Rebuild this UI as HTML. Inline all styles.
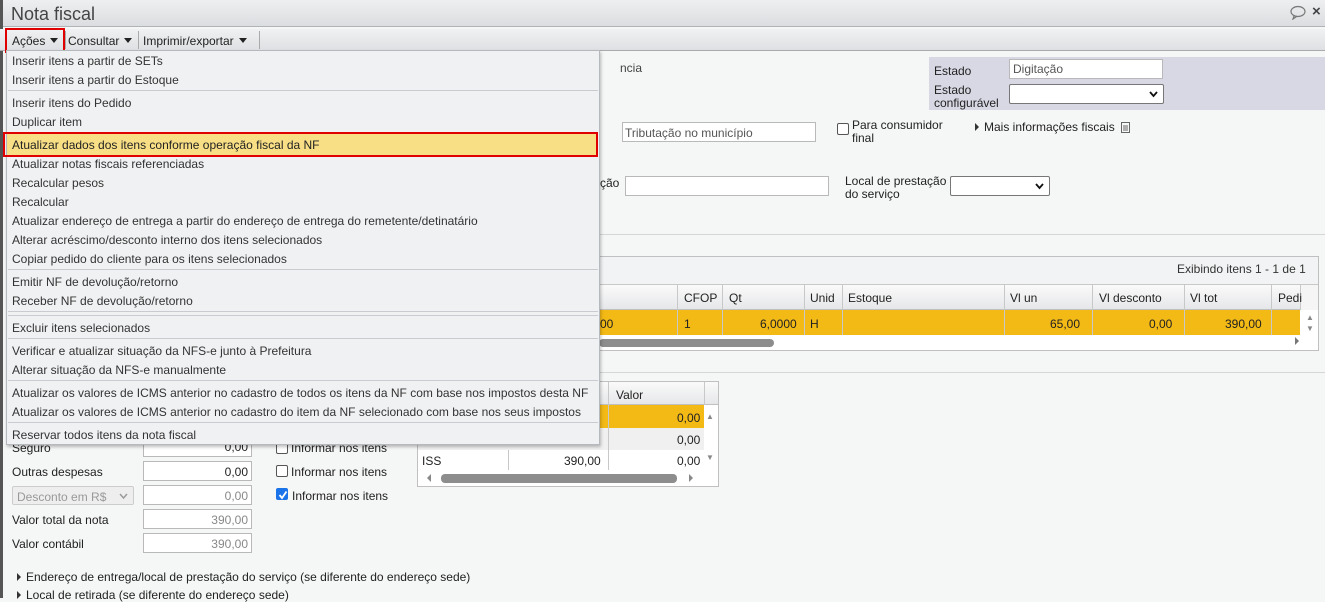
<!DOCTYPE html>
<html><head><meta charset="utf-8"><style>
*{box-sizing:border-box;margin:0;padding:0}
body{width:1325px;height:598px;overflow:hidden;background:#f5f6f6;font-family:"Liberation Sans",sans-serif;font-size:12px;color:#222;position:relative}
.a{position:absolute;white-space:nowrap}
.inp{position:absolute;background:#fff;border:1px solid #b9b9b9}
.mi{position:absolute;left:12px;font-size:12px;color:#333;white-space:nowrap}
.sep{position:absolute;left:8px;width:590px;height:1px;background:#c9cbd0}
.tri{display:inline-block;width:0;height:0;border-left:4px solid #333;border-top:4px solid transparent;border-bottom:4px solid transparent;margin-right:5px}
.dd{display:inline-block;width:0;height:0;border-top:5px solid #222;border-left:4px solid transparent;border-right:4px solid transparent;margin-left:5px;vertical-align:2px}
.vl{position:absolute;width:1px;background:#c8c8c8}
.cb{position:absolute;width:12px;height:12px;border:1px solid #555;border-radius:2px;background:#fff}
</style></head><body>
<div class="a" style="left:0;top:0;width:1325px;height:27px;background:linear-gradient(#eeeff0,#dcdde0);border-bottom:1px solid #b0b3b8"></div>
<div class="a" style="left:0;top:0;width:3px;height:598px;background:#555"></div>
<div class="a" style="left:11px;top:4px;font-size:18px;color:#444">Nota fiscal</div>
<svg class="a" style="left:1289px;top:5px" width="18" height="15"><ellipse cx="9" cy="6.5" rx="7" ry="5" fill="none" stroke="#777" stroke-width="1.2"/><path d="M5 11 L4 14 L8 11.2" fill="none" stroke="#777" stroke-width="1.2"/></svg>
<div class="a" style="left:1312px;top:3px;font-size:15px;font-weight:bold;color:#444">×</div>
<div class="a" style="left:0;top:29px;width:1325px;height:22px;background:linear-gradient(#f0f1f2,#dfe0e3);border-bottom:1px solid #aaa"></div>
<div class="a" style="left:5px;top:28px;width:60px;height:25px;border:2px solid #e00000"></div>
<div class="a" style="left:65px;top:31px;width:1px;height:18px;background:#aaa"></div>
<div class="a" style="left:138px;top:31px;width:1px;height:18px;background:#aaa"></div>
<div class="a" style="left:259px;top:31px;width:1px;height:18px;background:#aaa"></div>
<div class="a" style="left:12px;top:34px">Ações<span class="dd"></span></div>
<div class="a" style="left:68px;top:34px">Consultar<span class="dd"></span></div>
<div class="a" style="left:143px;top:34px">Imprimir/exportar<span class="dd"></span></div>

<!-- top right box -->
<div class="a" style="left:929px;top:57px;width:396px;height:53px;background:#d8d8e4"></div>
<div class="a" style="left:934px;top:64px">Estado</div>
<div class="inp" style="left:1009px;top:59px;width:154px;height:20px;padding:2px 3px;color:#555">Digitação</div>
<div class="a" style="left:934px;top:84px;line-height:13px">Estado<br>configurável</div>
<div class="inp" style="left:1009px;top:84px;width:155px;height:20px;border-color:#777;border-radius:2px"><svg style="position:absolute;right:5px;top:6px" width="9" height="7"><path d="M1 1 L4.5 5 L8 1" fill="none" stroke="#111" stroke-width="1.8"/></svg></div>
<div class="a" style="left:620px;top:61px;color:#444">ncia</div>

<div class="inp" style="left:622px;top:122px;width:194px;height:20px;padding:3px 2px;color:#555">Tributação no município</div>
<div class="cb" style="left:837px;top:123px"></div>
<div class="a" style="left:852px;top:119px;line-height:13px">Para consumidor<br>final</div>
<div class="a" style="left:975px;top:120px"><span class="tri"></span>Mais informações fiscais</div>
<svg class="a" style="left:1121px;top:122px" width="9" height="11"><rect x="0.5" y="0.5" width="8" height="10" fill="none" stroke="#666"/><path d="M2 4H7M2 6H7M2 8H7" stroke="#666"/></svg>

<div class="a" style="left:600px;top:176px">ção</div>
<div class="inp" style="left:625px;top:176px;width:204px;height:20px"></div>
<div class="a" style="left:845px;top:175px;line-height:13px">Local de prestação<br>do serviço</div>
<div class="inp" style="left:950px;top:176px;width:100px;height:20px;border-color:#777;border-radius:2px"><svg style="position:absolute;right:5px;top:6px" width="9" height="7"><path d="M1 1 L4.5 5 L8 1" fill="none" stroke="#111" stroke-width="1.8"/></svg></div>
<div class="a" style="left:600px;top:234px;width:725px;height:1px;background:#d6d6d6"></div>

<!-- grid -->
<div class="a" style="left:598px;top:256px;width:721px;height:95px;border:1px solid #c0c0c0;background:#fff"></div>
<div class="a" style="left:599px;top:257px;width:719px;height:28px;background:#f2f3f4;border-bottom:1px solid #c8c8c8"></div>
<div class="a" style="left:1177px;top:262px;color:#333">Exibindo itens 1 - 1 de 1</div>
<div class="a" style="left:599px;top:285px;width:701px;height:25px;background:linear-gradient(#fafafa,#e6e7e9);border-bottom:1px solid #c0c0c0"></div>
<div class="a" style="left:1300px;top:285px;width:18px;height:25px;background:#f5f5f5"></div>
<div class="a" style="left:599px;top:310px;width:701px;height:25px;background:#f3b915"></div>
<div class="vl" style="left:677px;top:285px;height:50px"></div>
<div class="vl" style="left:722px;top:285px;height:50px"></div>
<div class="vl" style="left:804px;top:285px;height:50px"></div>
<div class="vl" style="left:842px;top:285px;height:50px"></div>
<div class="vl" style="left:1004px;top:285px;height:50px"></div>
<div class="vl" style="left:1092px;top:285px;height:50px"></div>
<div class="vl" style="left:1184px;top:285px;height:50px"></div>
<div class="vl" style="left:1271px;top:285px;height:50px"></div>
<div class="vl" style="left:1300px;top:285px;height:25px"></div>
<div class="a" style="left:684px;top:291px">CFOP</div>
<div class="a" style="left:729px;top:291px">Qt</div>
<div class="a" style="left:810px;top:291px">Unid</div>
<div class="a" style="left:848px;top:291px">Estoque</div>
<div class="a" style="left:1010px;top:291px">Vl un</div>
<div class="a" style="left:1099px;top:291px">Vl desconto</div>
<div class="a" style="left:1190px;top:291px">Vl tot</div>
<div class="a" style="left:1278px;top:291px">Pedi</div>
<div class="a" style="left:600px;top:317px">00</div>
<div class="a" style="left:684px;top:317px">1</div>
<div class="a" style="left:760px;top:317px">6,0000</div>
<div class="a" style="left:810px;top:317px">H</div>
<div class="a" style="left:1050px;top:317px">65,00</div>
<div class="a" style="left:1149px;top:317px">0,00</div>
<div class="a" style="left:1225px;top:317px">390,00</div>
<div class="a" style="left:1306px;top:312px;font-size:8px;color:#888;line-height:11px">▲<br>▼</div>
<div class="a" style="left:599px;top:339px;width:175px;height:8px;border-radius:4px;background:#8d8d8d"></div>
<div class="a" style="left:1295px;top:337px;width:0;height:0;border-left:4px solid #777;border-top:4px solid transparent;border-bottom:4px solid transparent"></div>
<div class="a" style="left:600px;top:372px;width:725px;height:1px;background:#d6d6d6"></div>

<!-- tax grid -->
<div class="a" style="left:417px;top:381px;width:302px;height:106px;border:1px solid #c0c0c0;background:#fff"></div>
<div class="a" style="left:418px;top:382px;width:300px;height:23px;background:linear-gradient(#fafafa,#e6e7e9);border-bottom:1px solid #c0c0c0"></div>
<div class="a" style="left:600px;top:405px;width:104px;height:23px;background:#f3b915"></div>
<div class="a" style="left:418px;top:428px;width:286px;height:22px;background:#f0f0f0"></div>
<div class="vl" style="left:508px;top:450px;height:20px"></div>
<div class="vl" style="left:608px;top:382px;height:88px"></div>
<div class="vl" style="left:704px;top:382px;height:23px"></div>
<div class="a" style="left:616px;top:388px">Valor</div>
<div class="a" style="left:677px;top:411px">0,00</div>
<div class="a" style="left:677px;top:433px">0,00</div>
<div class="a" style="left:422px;top:454px">ISS</div>
<div class="a" style="left:564px;top:454px">390,00</div>
<div class="a" style="left:677px;top:454px">0,00</div>
<div class="a" style="left:706px;top:412px;font-size:8px;color:#888">▲</div>
<div class="a" style="left:706px;top:453px;font-size:8px;color:#888">▼</div>
<div class="a" style="left:441px;top:474px;width:236px;height:9px;border-radius:4px;background:#8d8d8d"></div>
<div class="a" style="left:427px;top:474px;width:0;height:0;border-right:4px solid #888;border-top:4px solid transparent;border-bottom:4px solid transparent"></div>
<div class="a" style="left:689px;top:474px;width:0;height:0;border-left:4px solid #888;border-top:4px solid transparent;border-bottom:4px solid transparent"></div>

<!-- bottom-left form -->
<div class="a" style="left:12px;top:441px">Seguro</div>
<div class="inp" style="left:143px;top:437px;width:109px;height:20px;text-align:right;padding:2px 3px">0,00</div>
<div class="a" style="left:12px;top:465px">Outras despesas</div>
<div class="inp" style="left:143px;top:461px;width:109px;height:20px;text-align:right;padding:3px 3px">0,00</div>
<div class="a" style="left:12px;top:486px;width:122px;height:19px;border:1px solid #ccc;border-radius:2px;background:#eee;color:#999;padding:3px 4px">Desconto em R$<svg style="position:absolute;right:5px;top:6px" width="9" height="7"><path d="M1 1 L4.5 5 L8 1" fill="none" stroke="#999" stroke-width="1.4"/></svg></div>
<div class="inp" style="left:143px;top:485px;width:109px;height:20px;text-align:right;padding:3px 3px;color:#888">0,00</div>
<div class="a" style="left:12px;top:513px">Valor total da nota</div>
<div class="inp" style="left:143px;top:509px;width:109px;height:20px;text-align:right;padding:3px 3px;color:#888">390,00</div>
<div class="a" style="left:12px;top:537px">Valor contábil</div>
<div class="inp" style="left:143px;top:533px;width:109px;height:20px;text-align:right;padding:3px 3px;color:#888">390,00</div>
<div class="cb" style="left:276px;top:442px"></div><div class="a" style="left:291px;top:441px">Informar nos itens</div>
<div class="cb" style="left:276px;top:465px"></div><div class="a" style="left:291px;top:465px">Informar nos itens</div>
<div class="cb" style="left:276px;top:488px;background:#1a73e8;border-color:#1a73e8"><svg style="position:absolute;left:1px;top:1px" width="10" height="10"><path d="M1.5 5 L4 8 L8.5 1.5" fill="none" stroke="#fff" stroke-width="1.8"/></svg></div><div class="a" style="left:292px;top:489px">Informar nos itens</div>
<div class="a" style="left:17px;top:570px"><span class="tri"></span>Endereço de entrega/local de prestação do serviço (se diferente do endereço sede)</div>
<div class="a" style="left:17px;top:588px"><span class="tri"></span>Local de retirada (se diferente do endereço sede)</div>

<!-- dropdown menu -->
<div class="a" style="left:6px;top:50px;width:594px;height:395px;background:#f0f1f3;border:1px solid #b5b8bd;box-shadow:1px 2px 3px rgba(0,0,0,.25)"></div>
<div class="a" style="left:7px;top:134px;width:589px;height:21px;background:#f8df86"></div>
<div class="a" style="left:3px;top:132px;width:595px;height:25px;border:2px solid #e00000"></div>
<div class="mi" style="top:54px">Inserir itens a partir de SETs</div>
<div class="mi" style="top:73px">Inserir itens a partir do Estoque</div>
<div class="sep" style="top:90px"></div>
<div class="mi" style="top:96px">Inserir itens do Pedido</div>
<div class="mi" style="top:115px">Duplicar item</div>
<div class="mi" style="top:138px;color:#222">Atualizar dados dos itens conforme operação fiscal da NF</div>
<div class="mi" style="top:157px">Atualizar notas fiscais referenciadas</div>
<div class="mi" style="top:176px">Recalcular pesos</div>
<div class="mi" style="top:195px">Recalcular</div>
<div class="mi" style="top:214px">Atualizar endereço de entrega a partir do endereço de entrega do remetente/detinatário</div>
<div class="mi" style="top:233px">Alterar acréscimo/desconto interno dos itens selecionados</div>
<div class="mi" style="top:252px">Copiar pedido do cliente para os itens selecionados</div>
<div class="sep" style="top:269px"></div>
<div class="mi" style="top:275px">Emitir NF de devolução/retorno</div>
<div class="mi" style="top:294px">Receber NF de devolução/retorno</div>
<div class="sep" style="top:311px"></div>
<div class="sep" style="top:315px"></div>
<div class="mi" style="top:321px">Excluir itens selecionados</div>
<div class="sep" style="top:338px"></div>
<div class="mi" style="top:344px">Verificar e atualizar situação da NFS-e junto à Prefeitura</div>
<div class="mi" style="top:363px">Alterar situação da NFS-e manualmente</div>
<div class="sep" style="top:380px"></div>
<div class="mi" style="top:386px">Atualizar os valores de ICMS anterior no cadastro de todos os itens da NF com base nos impostos desta NF</div>
<div class="mi" style="top:405px">Atualizar os valores de ICMS anterior no cadastro do item da NF selecionado com base nos seus impostos</div>
<div class="sep" style="top:422px"></div>
<div class="mi" style="top:428px">Reservar todos itens da nota fiscal</div>
</body></html>
